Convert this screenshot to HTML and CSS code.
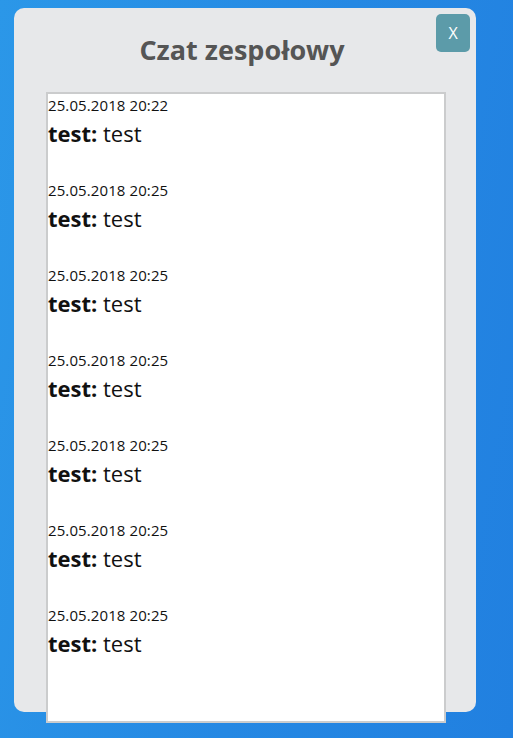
FILE: index.html
```html
<!DOCTYPE html>
<html lang="pl">
<head>
    <meta charset="UTF-8">
    <meta name="viewport" content="width=device-width, initial-scale=1.0">
    <title>Czat zespołowy</title>
    <link rel="stylesheet" href="styles.css">
</head>
<body>
    <div class="chat-modal">
        <button class="close-btn">X</button>
        <h2 class="chat-title">Czat zespołowy</h2>
        <div class="chat-log">
            <div class="chat-entry">
                <div class="chat-time">25.05.2018 20:22</div>
                <div class="chat-msg"><strong>test:</strong> test</div>
            </div>
            <div class="chat-entry">
                <div class="chat-time">25.05.2018 20:25</div>
                <div class="chat-msg"><strong>test:</strong> test</div>
            </div>
            <div class="chat-entry">
                <div class="chat-time">25.05.2018 20:25</div>
                <div class="chat-msg"><strong>test:</strong> test</div>
            </div>
            <div class="chat-entry">
                <div class="chat-time">25.05.2018 20:25</div>
                <div class="chat-msg"><strong>test:</strong> test</div>
            </div>
            <div class="chat-entry">
                <div class="chat-time">25.05.2018 20:25</div>
                <div class="chat-msg"><strong>test:</strong> test</div>
            </div>
            <div class="chat-entry">
                <div class="chat-time">25.05.2018 20:25</div>
                <div class="chat-msg"><strong>test:</strong> test</div>
            </div>
            <div class="chat-entry">
                <div class="chat-time">25.05.2018 20:25</div>
                <div class="chat-msg"><strong>test:</strong> test</div>
            </div>
        </div>
    </div>
</body>
</html>
```

FILE: styles.css
```css
html, body {
    height: 100%;
}
body {
    font-family: 'Open Sans', 'Noto Sans', sans-serif;
    margin: 0;
    padding: 8px 0 0 14px;
    box-sizing: border-box;
    overflow: hidden;
    background: linear-gradient(100deg, #2b97e8 0%, #2588e3 55%, #2180e0 100%);
}
.chat-modal {
    position: relative;
    width: 462px;
    height: 704px;
    background: #e7e8ea;
    border-radius: 10px;
    padding: 0 30px 0 32px;
    box-sizing: border-box;
}
.close-btn {
    position: absolute;
    top: 6px;
    right: 6px;
    width: 34px;
    height: 38px;
    border: none;
    border-radius: 5px;
    background: #5c9ba9;
    color: #fff;
    font-family: 'Open Sans', sans-serif;
    font-size: 16px;
    padding: 0;
}
.chat-title {
    margin: 0;
    padding: 24px 8px 0 0;
    height: 60px;
    text-align: center;
    font-size: 27px;
    font-weight: 700;
    color: #555;
    line-height: 36px;
}
.chat-log {
    width: 400px;
    height: 631px;
    box-sizing: border-box;
    border: 2px solid #cbcccd;
    background: #fff;
}
.chat-entry {
    margin-bottom: 29px;
}
.chat-time {
    font-size: 15px;
    line-height: 22px;
    color: #111;
    letter-spacing: 0.1px;
}
.chat-msg {
    font-size: 22px;
    line-height: 34px;
    color: #111;
}
.chat-msg strong {
    font-weight: 700;
}
```
